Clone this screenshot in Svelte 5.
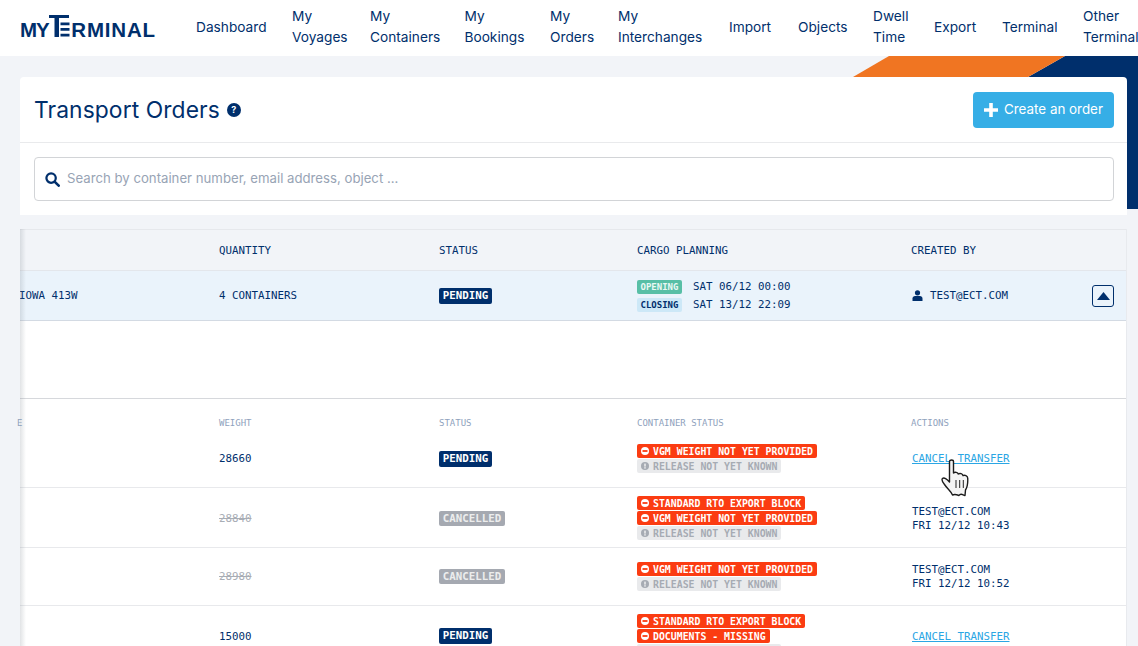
<script>
  const nav = [
    ['Dashboard'], ['My', 'Voyages'], ['My', 'Containers'], ['My', 'Bookings'], ['My', 'Orders'],
    ['My', 'Interchanges'], ['Import'], ['Objects'], ['Dwell', 'Time'], ['Export'], ['Terminal'], ['Other', 'Terminals']
  ];
  const VGM = { t: 'VGM WEIGHT NOT YET PROVIDED', k: 'red' };
  const REL = { t: 'RELEASE NOT YET KNOWN', k: 'grey' };
  const RTO = { t: 'STANDARD RTO EXPORT BLOCK', k: 'red' };
  const DOC = { t: 'DOCUMENTS - MISSING', k: 'red' };
  const rows = [
    { w: '28660', s: 'PENDING', tags: [VGM, REL], link: true },
    { w: '28840', s: 'CANCELLED', tags: [RTO, VGM, REL], a: ['TEST@ECT.COM', 'FRI 12/12 10:43'] },
    { w: '28980', s: 'CANCELLED', tags: [VGM, REL], a: ['TEST@ECT.COM', 'FRI 12/12 10:52'] },
    { w: '15000', s: 'PENDING', tags: [RTO, DOC, REL], link: true }
  ];
</script>

<div class="page">
  <svg class="deco" width="1138" height="160" viewBox="0 56 1138 160" aria-hidden="true">
    <polygon points="1065,56 1138,56 1138,209 1028,209 1028,77" fill="#002f6c" />
    <polygon points="889,56 1065,56 1028,77 853,77" fill="#f07522" />
  </svg>

  <header class="top">
    <div class="logo" aria-label="MyTerminal">
      <span class="my">MY</span>
      <svg class="logo-t" width="21" height="22" viewBox="0 0 21 22" aria-hidden="true">
        <path d="M0 0H20V3H10V22H5.5V3H0Z" fill="#002f6c" />
        <path d="M11.5 7.5H20.5V10.3H11.5ZM11.5 13H20.5V15.8H11.5ZM11.5 18.7H20.5V21.5H11.5Z" fill="#002f6c" />
      </svg>
      <span class="rest">RMINAL</span>
    </div>
    <nav class="nav">
      {#each nav as item}
        <a class="nav-item" href="#top">{#each item as line}<span>{line}</span>{/each}</a>
      {/each}
    </nav>
  </header>

  <section class="card">
    <div class="card-head">
      <div class="title-wrap">
        <h1>Transport Orders</h1>
        <span class="help">?</span>
      </div>
      <button class="create">
        <svg width="14" height="14" viewBox="0 0 14 14" aria-hidden="true"><path d="M5.2 0H8.8V5.2H14V8.8H8.8V14H5.2V8.8H0V5.2H5.2Z" fill="#fff" /></svg>
        Create an order
      </button>
    </div>
    <div class="search-wrap">
      <div class="search">
        <svg width="15" height="15" viewBox="0 0 16 16" aria-hidden="true"><circle cx="6.5" cy="6.5" r="5" fill="none" stroke="#002f6c" stroke-width="2.4" /><path d="M10.2 10.2L14.6 14.6" stroke="#002f6c" stroke-width="2.8" stroke-linecap="round" /></svg>
        <span>Search by container number, email address, object ...</span>
      </div>
    </div>
  </section>

  <section class="table">
    <div class="shadow"></div>
    <div class="grid head">
      <div></div><div>QUANTITY</div><div>STATUS</div><div>CARGO PLANNING</div><div>CREATED BY</div>
    </div>
    <div class="grid main">
      <div class="voyage">IOWA 413W</div>
      <div>4 CONTAINERS</div>
      <div><span class="status pending">PENDING</span></div>
      <div class="plan">
        <div class="plan-line"><span class="chip opening">OPENING</span><span>SAT 06/12 00:00</span></div>
        <div class="plan-line"><span class="chip closing">CLOSING</span><span>SAT 13/12 22:09</span></div>
      </div>
      <div class="creator">
        <svg width="11" height="11" viewBox="0 0 11 11" aria-hidden="true"><circle cx="5.5" cy="2.8" r="2.6" fill="#002f6c" /><path d="M.5 11V8.6C.5 7 1.6 6 3.1 6H7.9C9.4 6 10.5 7 10.5 8.6V11Z" fill="#002f6c" /></svg>
        <span>TEST@ECT.COM</span>
        <button class="collapse" aria-label="Collapse"><svg width="13" height="8" viewBox="0 0 13 8" aria-hidden="true"><path d="M6.5 0L13 8H0Z" fill="#002f6c" /></svg></button>
      </div>
    </div>
    <div class="spacer"></div>
    <div class="grid sub">
      <div class="cut">E</div><div>WEIGHT</div><div>STATUS</div><div>CONTAINER STATUS</div><div>ACTIONS</div>
    </div>
    {#each rows as r}
      <div class="grid row" class:tall={r.tags.length === 3}>
        <div></div>
        <div class:struck={r.s === 'CANCELLED'}>{r.w}</div>
        <div><span class="status" class:pending={r.s === 'PENDING'} class:cancelled={r.s === 'CANCELLED'}>{r.s}</span></div>
        <div class="tags">
          {#each r.tags as tag}
            <span class="tag {tag.k}">
              {#if tag.k === 'red'}
                <svg width="8" height="8" viewBox="0 0 8 8" aria-hidden="true"><circle cx="4" cy="4" r="4" fill="#fff" /><rect x="1.5" y="3.1" width="5" height="1.8" fill="#fb3c12" /></svg>
              {:else}
                <svg width="8" height="8" viewBox="0 0 8 8" aria-hidden="true"><circle cx="4" cy="4" r="4" fill="#a6abb3" /><rect x="3.2" y="1.6" width="1.6" height="3" fill="#e9eaec" /><rect x="3.2" y="5.2" width="1.6" height="1.4" fill="#e9eaec" /></svg>
              {/if}
              {tag.t}
            </span>
          {/each}
        </div>
        <div class="action">
          {#if r.link}
            <a class="link" href="#top">CANCEL TRANSFER</a>
          {:else}
            <div class="who-block"><div class="who">{r.a[0]}</div><div class="who">{r.a[1]}</div></div>
          {/if}
        </div>
      </div>
    {/each}
    <svg class="cursor" width="32" height="38" viewBox="0 0 32 38" aria-hidden="true">
      <path d="M8.5 2.5C8.5 .5 12.5 .5 12.5 2.5V14C14 12.8 16.8 13.2 17.3 15C19 14 21.6 14.6 22 16.6C23.8 15.8 26.5 16.6 26.7 19C27 24 26.5 28 24.5 31L24 36.5C21 35.5 19.5 34 18 36.5C15.5 35.5 13.5 35 11.5 36C10 32 6.5 30 3.5 25.5C1.5 23 .5 20.5 1.5 19.5C3 18 6 20 8.5 23Z" fill="#f4f4f4" stroke="#1c1c1c" stroke-width="1.4" stroke-linejoin="round" />
      <path d="M15 21V29M18.7 21V29M22.3 21V29" stroke="#222" stroke-width="1" />
    </svg>
  </section>
</div>

<style>
  :global(body) {
    margin: 0;
    background: #f2f4f8;
    overflow: hidden;
  }
  .page {
    position: relative;
    height: 646px;
    overflow: hidden;
    background: #f2f4f8;
    color: #002f6c;
    font-family: Inter, "Noto Sans", sans-serif;
  }
  .deco {
    position: absolute;
    left: 0;
    top: 56px;
  }
  .top {
    position: relative;
    height: 56px;
    box-sizing: border-box;
    padding-bottom: 2px;
    background: #fff;
    display: flex;
    align-items: center;
  }
  .logo {
    width: 176px;
    margin-left: 20px;
    margin-bottom: 3px;
    display: flex;
    align-items: flex-end;
    font-family: "Liberation Sans", sans-serif;
    font-weight: 700;
    font-size: 20.5px;
    line-height: 20px;
    height: 22px;
    color: #002f6c;
    flex: none;
  }
  .logo span {
    margin-bottom: -3px;
  }
  .my {
    letter-spacing: -1.2px;
  }
  .rest {
    letter-spacing: 0.8px;
  }
  .logo-t {
    margin: 0 1px 0 1px;
    flex: none;
  }
  .nav {
    display: grid;
    grid-template-columns: 96px 78px 94.5px 85.5px 68px 111px 69px 75px 61px 68px 81px 60px;
    align-items: center;
    flex: none;
  }
  .nav-item {
    display: flex;
    flex-direction: column;
    color: #002f6c;
    text-decoration: none;
    font-size: 13.7px;
    line-height: 21px;
    white-space: nowrap;
  }
  .card {
    position: relative;
    margin: 21px 11px 0 20px;
    background: #fff;
    border-radius: 4px 4px 0 0;
    height: 138px;
  }
  .card-head {
    height: 65px;
    border-bottom: 1px solid #e9eaec;
    display: flex;
    align-items: center;
    justify-content: space-between;
    padding: 0 13px 0 14px;
  }
  .title-wrap {
    display: flex;
    align-items: center;
    gap: 7px;
  }
  h1 {
    margin: 0;
    font-size: 22.8px;
    font-weight: 400;
    color: #002f6c;
    letter-spacing: 0.1px;
  }
  .help {
    width: 14px;
    height: 14px;
    border-radius: 50%;
    background: #002f6c;
    color: #fff;
    font-size: 9px;
    font-weight: 700;
    display: flex;
    align-items: center;
    justify-content: center;
  }
  .create {
    width: 141px;
    height: 36px;
    border: 0;
    border-radius: 4px;
    background: #36aee6;
    color: #fff;
    font: 400 13.4px Inter, sans-serif;
    display: flex;
    align-items: center;
    justify-content: center;
    gap: 6px;
    padding: 0 0 2px;
  }
  .create svg {
    margin-top: 2px;
  }
  .search-wrap {
    padding: 14px 13px 14px 14px;
  }
  .search {
    height: 42px;
    border: 1px solid #d2d4d7;
    border-radius: 4px;
    display: flex;
    align-items: center;
    gap: 7px;
    padding-left: 10px;
    color: #98a4b5;
    font-size: 13.2px;
  }
  .search span {
    margin-bottom: 2px;
  }
  .table {
    position: relative;
    margin: 14px 11px 0 20px;
    font-family: "DejaVu Sans Mono", "Liberation Mono", monospace;
    font-size: 10.8px;
    color: #002f6c;
    background: #fff;
    border-right: 1px solid #e8eaee;
  }
  .shadow {
    position: absolute;
    left: 0;
    top: 0;
    bottom: 0;
    width: 6px;
    background: linear-gradient(to right, rgba(120, 130, 140, 0.22), rgba(120, 130, 140, 0));
    z-index: 2;
  }
  .grid {
    display: grid;
    grid-template-columns: 199px 220px 198px 274px 1fr;
    align-items: center;
  }
  .head {
    height: 42px;
    box-sizing: border-box;
    padding-top: 1px;
    background: #f2f4f8;
    border-top: 1px solid #e6e8ec;
    border-bottom: 1px solid #e3e6eb;
  }
  .main {
    height: 50px;
    box-sizing: border-box;
    background: #eaf3fb;
    border-bottom: 1px solid #d3dae3;
  }
  .voyage {
    overflow: hidden;
    white-space: nowrap;
    text-indent: -1px;
  }
  .status {
    display: inline-block;
    padding: 0 3.7px;
    height: 16px;
    line-height: 16px;
    border-radius: 2px;
    color: #fff;
    font-weight: 700;
    vertical-align: middle;
  }
  .pending {
    background: #002f6c;
  }
  .cancelled {
    background: #a5a9b1;
    color: #eceded;
    height: 15px;
    line-height: 15px;
  }
  .plan {
    display: flex;
    flex-direction: column;
    gap: 4px;
  }
  .plan-line {
    display: flex;
    align-items: center;
    gap: 11px;
  }
  .chip {
    width: 45px;
    height: 14px;
    line-height: 14px;
    text-align: center;
    border-radius: 2px;
    font-size: 9px;
    font-weight: 700;
  }
  .opening {
    background: #58bfa6;
    color: #e9f8f4;
  }
  .closing {
    background: #cde8f7;
    color: #002f6c;
  }
  .creator {
    display: flex;
    align-items: center;
    gap: 7px;
    padding-left: 1px;
  }
  .collapse {
    margin-left: 77px;
    width: 22px;
    height: 22px;
    padding: 0;
    border: 1.5px solid #002f6c;
    border-radius: 3px;
    background: #eaf3fb;
    display: flex;
    align-items: center;
    justify-content: center;
  }
  .spacer {
    height: 77px;
    background: #fff;
    border-bottom: 1px solid #d6d8dc;
  }
  .sub {
    height: 31px;
    padding-top: 17px;
    box-sizing: border-box;
    font-size: 9px;
    color: #8fa2bd;
    background: #fff;
  }
  .cut {
    margin-left: -3px;
  }
  .row {
    min-height: 58px;
    padding: 7.5px 0;
    box-sizing: border-box;
    border-bottom: 1px solid #e8e9ec;
    background: #fff;
  }
  .tall {
    padding: 8px 0 7px;
  }
  .struck {
    color: #a8adb5;
    text-decoration: line-through;
  }
  .tags {
    display: flex;
    flex-direction: column;
    align-items: flex-start;
    gap: 1px;
  }
  .tag {
    display: inline-flex;
    align-items: center;
    gap: 4px;
    height: 14px;
    padding: 0 4px;
    border-radius: 2px;
    font-size: 9.85px;
    font-weight: 700;
    white-space: nowrap;
  }
  .red {
    background: #fb3c12;
    color: #fff;
  }
  .grey {
    background: #e9eaec;
    color: #a6abb3;
  }
  .action {
    padding-left: 1px;
  }
  .link {
    color: #2ba6e4;
    text-decoration: underline;
  }
  .who-block {
    padding-top: 1px;
  }
  .who {
    line-height: 14px;
  }
  .cursor {
    position: absolute;
    left: 921px;
    top: 230px;
    z-index: 3;
  }
</style>
